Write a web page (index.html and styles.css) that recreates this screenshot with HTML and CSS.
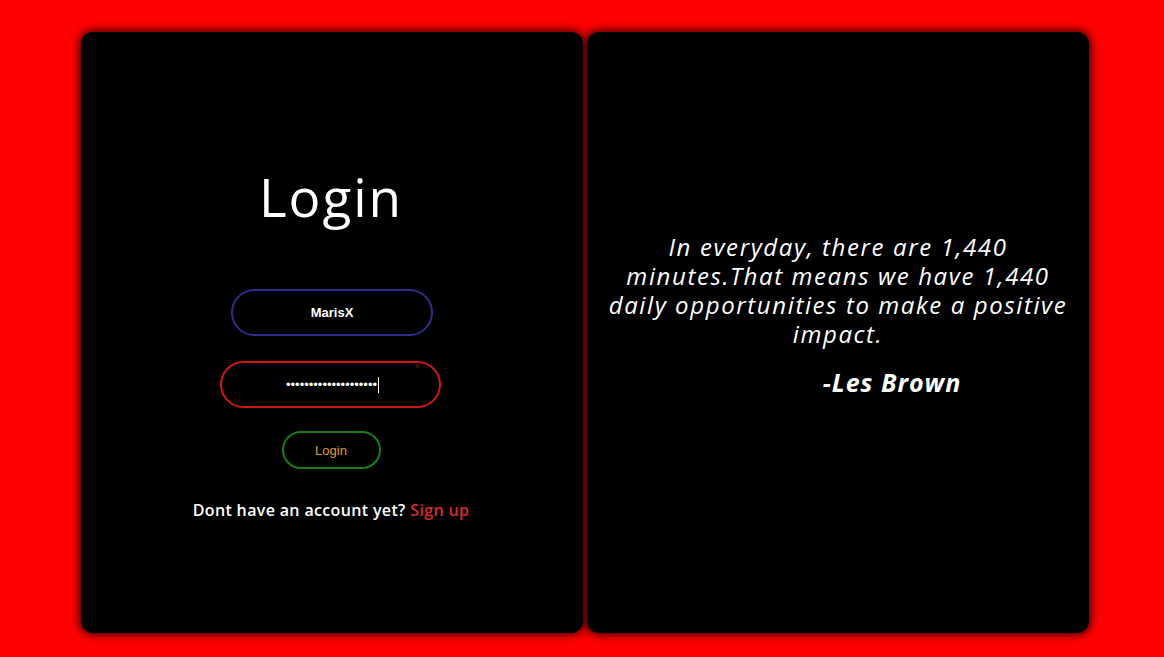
FILE: index.html
```html
<!DOCTYPE html>
<html>
<head>
<meta charset="utf-8">
<link rel="stylesheet" href="styles.css">
</head>
<body>
<div class="wrap">
  <div class="card login-card">
    <h1 class="title">Login</h1>
    <div class="field user">MarisX</div>
    <div class="field pass"><span class="dots">••••••••••••••••••••</span><span class="caret"></span></div>
    <button class="btn">Login</button>
    <p class="signup">Dont have an account yet? <span class="link">Sign up</span></p>
  </div>
  <div class="card quote-card">
    <p class="quote">In everyday, there are 1,440 minutes.That means we have 1,440 daily opportunities to make a positive impact.</p>
    <p class="author">-Les Brown</p>
  </div>
</div>
</body>
</html>
```
FILE: styles.css
```css
html, body {
  margin: 0;
  padding: 0;
  background: #ff0000;
  height: 100%;
}
body {
  font-family: "Open Sans", "DejaVu Sans", sans-serif;
  color: #fff;
}
.wrap {
  display: flex;
  gap: 4px;
  padding: 32px 0 0 81px;
}
.card {
  width: 502px;
  height: 601px;
  background: #000;
  border-radius: 12px;
  box-shadow: 0 0 8px 2px rgba(0,0,0,0.75);
  box-sizing: border-box;
}
.login-card {
  display: flex;
  flex-direction: column;
  align-items: center;
  padding-top: 134px;
}
.title {
  margin: 0 2px 0 0;
  font-weight: 400;
  font-size: 53px;
  line-height: 62px;
  letter-spacing: 2px;
}
.field {
  height: 47px;
  box-sizing: border-box;
  border-radius: 24px;
  display: flex;
  align-items: center;
  justify-content: center;
  font-family: "Liberation Sans", Arial, sans-serif;
  font-size: 13px;
}
.user {
  margin-top: 61px;
  width: 202px;
  border: 2px solid #2e2e8a;
  font-weight: 700;
}
.pass {
  margin: 25px 3px 0 0;
  width: 221px;
  border: 2px solid #d01818;
}
.dots {
  font-size: 13px;
  letter-spacing: 0;
  margin-left: 4px;
}
.caret {
  width: 1px;
  height: 16px;
  background: #fff;
  margin-left: 1px;
}
.btn {
  margin: 23px 2px 0 0;
  width: 99px;
  height: 38px;
  border-radius: 19px;
  border: 2px solid #177d17;
  background: #000;
  color: #dc9c32;
  font-family: "Liberation Sans", Arial, sans-serif;
  font-size: 13px;
  padding: 0;
}
.signup {
  margin: 30px 2px 0 0;
  font-size: 16px;
  font-weight: 600;
  letter-spacing: 0.35px;
}
.link {
  color: #d82a2a;
}
.quote-card {
  display: flex;
  flex-direction: column;
  align-items: center;
  padding: 200px 16px 0;
}
.quote {
  margin: 0;
  font-style: italic;
  font-size: 24px;
  line-height: 29px;
  letter-spacing: 1.6px;
  text-align: center;
}
.author {
  margin: 20px 0 0 108px;
  font-style: italic;
  font-weight: 700;
  font-size: 25px;
  line-height: 29px;
  letter-spacing: 1px;
}
```
